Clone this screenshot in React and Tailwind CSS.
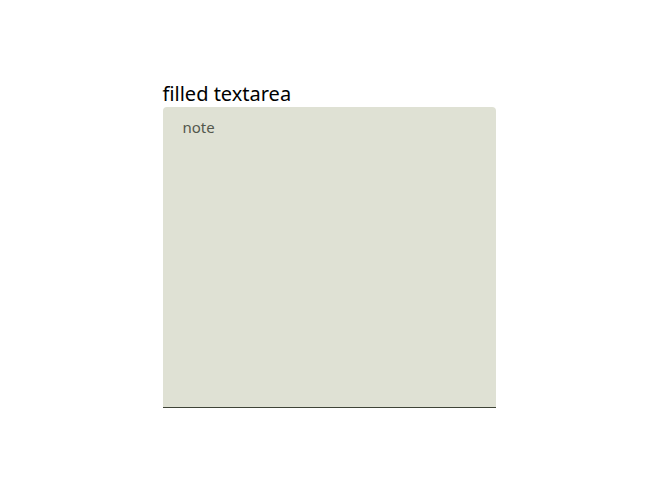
export default function App() {
  return (
    <div
      className="w-[656px] h-[492px] bg-white flex items-center justify-center pl-[2px] pt-[2px]"
      style={{ fontFamily: '"Noto Sans", "Open Sans", sans-serif' }}
    >
      <div className="flex flex-col">
        <label htmlFor="note" className="text-[20px] leading-[21px] mb-[3px] -mt-[3px] text-black">
          filled textarea
        </label>
        <textarea
          id="note"
          placeholder="note"
          className="w-[333px] h-[301px] resize-none bg-[#dfe1d4] rounded-t-[4px] border-b border-[#3f4437] px-5 pt-[9px] text-[15px] text-[#53574c] placeholder:text-[#53574c] outline-none"
        />
      </div>
    </div>
  );
}
